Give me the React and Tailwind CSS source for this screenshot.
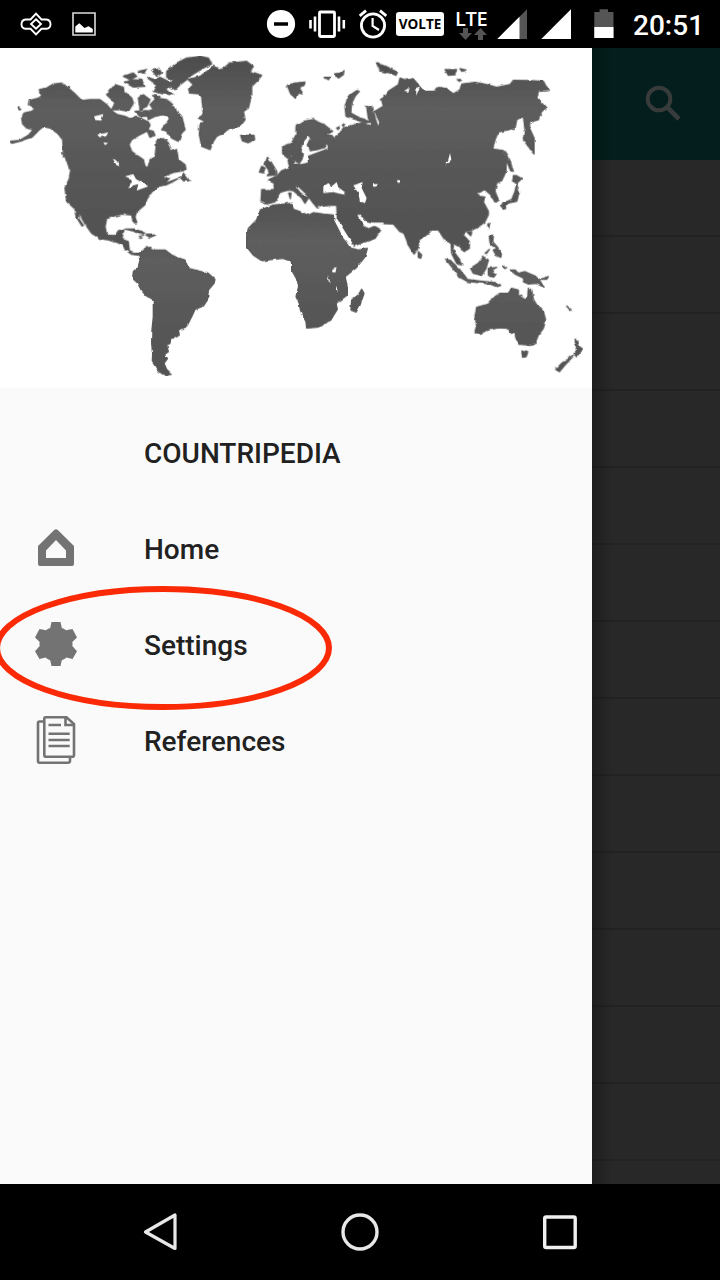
const LAND = "#595959";

function WorldMap() {
  return (
    <svg viewBox="0 0 1776 1020" className="block h-[340px] w-[592px] shrink-0 bg-white" aria-hidden="true">
      <defs>
        <linearGradient id="land" gradientUnits="userSpaceOnUse" x1="0" y1="0" x2="0" y2="1020">
          <stop offset="0" stopColor="#4a4a4a" />
          <stop offset="0.18" stopColor="#5e5e5e" />
          <stop offset="0.5" stopColor="#535353" />
          <stop offset="1" stopColor="#4e4e4e" />
        </linearGradient>
        <filter id="coast" x="0" y="0" width="100%" height="100%">
          <feTurbulence type="fractalNoise" baseFrequency="0.06" numOctaves="1" seed="4" result="n" />
          <feDisplacementMap in="SourceGraphic" in2="n" scale="9" xChannelSelector="R" yChannelSelector="G" />
          <feGaussianBlur stdDeviation="1.3" />
        </filter>
      </defs>
      <g filter="url(#coast)" fill="url(#land)" stroke={LAND} strokeWidth="4" strokeLinejoin="round">
        {/* North America */}
        <path d="M30 280L60 277L85 262L100 245L80 240L68 228L65 210L72 195L95 190L105 182L85 170L88 158L110 152L122 148L118 125L140 120L160 108L185 105L205 120L225 138L245 158L270 155L300 155L320 170L335 188L352 200L375 205L390 212L410 208L425 212L445 222L450 232L440 250L420 260L395 275L387 290L395 310L415 325L430 335L435 355L443 360L450 335L465 325L468 300L470 275L490 272L505 285L515 310L530 305L535 335L555 350L558 362L545 372L556 382L568 398L550 398L540 388L520 400L500 410L475 415L455 432L440 455L435 470L410 491L405 506L410 524L400 524L395 501L365 498L345 503L320 511L315 536L320 561L345 563L355 548L372 546L365 574L385 581L388 611L400 616L420 616L418 622L395 619L375 604L370 591L345 581L300 571L275 556L258 532L238 498L236 512L250 532L246 534L228 505L224 482L200 460L195 420L208 392L212 365L200 340L190 310L188 275L175 258L150 240L130 236L118 245L95 268L65 278L35 286Z" />
        {/* Canadian Arctic */}
        <path d="M500 70L530 45L560 30L600 25L625 30L635 48L610 60L580 78L560 95L540 110L525 125L508 112L520 95L500 88ZM470 150L500 155L525 175L530 195L545 205L555 245L545 255L535 280L515 270L500 250L485 245L500 225L510 210L490 200L465 205L445 215L440 190L460 185L450 170ZM320 140L345 110L370 118L372 130L395 150L400 165L385 190L360 185L335 185L345 165ZM370 85L400 75L410 85L390 95ZM375 103L395 95L425 97L435 115L400 117ZM415 70L440 65L435 76ZM455 65L475 60L485 75L470 85ZM440 88L465 95L480 88L515 105L500 125L520 140L490 138L460 130L470 110ZM415 150L430 140L450 155L440 175L420 185ZM458 142L480 146L470 160ZM405 190L440 188L445 205L420 205ZM440 245L460 250L465 262L450 268ZM55 178L62 184L58 186ZM185 312L193 325L188 326ZM205 348L218 355L208 362Z" />
        {/* Caribbean */}
        <path d="M375 543L405 543L435 556L430 562L400 549ZM438 561L467 561L450 568ZM418 565L426 567L420 568Z" />
        <g transform="translate(300 456)">
          <path d="M116 162L135 145L150 142L165 150L195 150L215 165L230 172L255 180L265 205L290 212L325 220L345 238L342 250L325 270L322 300L310 318L285 328L275 350L262 375L250 388L235 390L238 405L225 413L212 415L210 430L200 435L205 455L192 465L203 475L192 490L200 508L214 522L200 528L185 520L170 505L157 485L158 460L155 430L156 390L160 350L160 298L140 288L125 272L112 248L98 235L100 215L115 200L120 180Z" />
        </g>
        {/* Africa and Madagascar */}
        <g transform="translate(180 396)">
          <path d="M600 90L640 75L695 70L700 88L720 95L745 106L760 98L790 102L820 105L822 122L850 170L876 205L895 210L922 205L915 230L890 262L855 290L862 320L862 345L828 370L832 388L815 415L790 435L770 442L740 444L738 425L722 395L718 370L708 350L716 320L712 300L695 270L695 245L670 235L640 238L605 242L580 225L560 200L560 170L565 145L590 120ZM905 328L912 340L900 375L888 396L873 390L875 360L895 345Z" />
        </g>
        {/* Eurasia */}
        <path d="M785 425L823 425L822 405L805 398L810 393L830 385L845 368L870 358L864 340L868 325L880 328L880 348L905 350L925 345L925 325L985 302L985 290L995 275L1015 262L1030 240L1055 232L1085 225L1115 235L1105 210L1100 175L1118 180L1125 210L1135 240L1140 225L1125 190L1150 175L1145 155L1165 130L1195 110L1200 90L1220 97L1240 92L1258 115L1270 130L1305 130L1315 118L1340 122L1360 138L1380 125L1385 108L1425 103L1460 110L1490 118L1530 110L1540 97L1590 98L1630 100L1645 128L1615 130L1610 150L1625 165L1638 180L1625 190L1615 215L1590 222L1588 240L1602 270L1602 318L1585 295L1570 275L1575 240L1570 205L1550 215L1545 240L1495 252L1485 275L1478 303L1510 308L1518 335L1518 370L1505 398L1490 405L1485 430L1495 455L1485 462L1472 440L1455 425L1430 435L1435 445L1455 447L1450 462L1465 490L1465 500L1455 521L1430 541L1410 548L1395 551L1390 561L1408 581L1408 601L1392 611L1380 596L1362 586L1358 606L1380 636L1385 651L1370 646L1355 616L1353 586L1335 576L1315 546L1295 546L1285 556L1258 578L1252 606L1242 618L1228 596L1212 556L1200 551L1180 528L1115 526L1095 516L1078 504L1095 531L1105 538L1120 532L1142 546L1125 571L1060 594L1042 561L1012 513L1010 471L970 474L955 466L952 480L940 466L930 452L918 436L892 412L885 414L900 434L925 450L915 466L905 450L880 428L865 426L845 431L825 461L800 468L783 461Z" />
        <g transform="translate(540 0)">
          <path d="M308 295L308 318L322 330L335 320L345 340L358 345L365 335L370 320L362 300L370 280L385 262L392 270L382 290L388 308L410 305L435 298L440 290L465 275L455 262L435 262L458 250L430 228L400 215L370 220L348 235L348 260L335 285ZM262 328L275 345L290 370L290 380L262 383L268 370L255 350ZM245 355L255 360L250 375L238 372ZM182 262L222 262L224 275L205 284L187 278ZM322 112L345 105L375 102L372 112L358 118L368 138L355 135L348 152L332 138ZM538 130L530 128L505 145L495 175L498 205L520 212L555 225L570 222L530 205L512 195L515 165L525 145ZM435 88L450 88L445 95ZM465 78L480 75L492 68L490 80L475 90ZM470 240L478 236L474 245ZM486 232L494 226L490 236ZM326 435L333 435L331 452ZM410 468L425 470L422 474Z" />
          <path d="M25 95L60 85L100 55L125 65L150 45L200 40L220 55L210 70L245 82L235 95L215 115L215 140L205 180L190 190L195 215L180 235L150 240L130 255L110 265L100 280L90 305L65 295L58 260L60 230L75 220L55 210L70 200L65 145L55 137L28 135L30 120L40 110Z" />
        </g>
        <g transform="translate(1110 0)">
          <path d="M18 42L35 50L60 62L82 72L78 82L60 75L30 68ZM225 65L260 65L255 80L235 82ZM270 62L288 66L275 70ZM262 95L275 95L268 100ZM430 383L440 383L455 392L438 408L428 400ZM440 408L448 435L440 460L415 465L405 483L393 475L400 463L425 455L435 430ZM405 310L415 325L430 370L422 368L412 345Z" />
        </g>
        {/* South-east Asia and Oceania */}
        <g transform="translate(1140 456)">
          <path d="M197 177L212 182L240 210L260 235L258 242L240 232L215 200ZM258 238L300 243L345 248L365 255L350 260L330 252L260 244ZM272 205L295 190L310 170L325 180L318 205L305 226L280 220ZM325 205L350 202L335 210L348 220L340 235L325 225ZM370 198L380 203L374 206ZM390 210L405 210L415 220L435 215L465 228L480 243L492 262L470 250L445 252L430 245L432 235L405 222ZM480 238L505 230L500 238ZM328 108L340 110L338 125L355 145L345 140L330 128ZM340 150L350 145L365 158L362 172L348 165ZM315 160L328 148L320 160ZM323 72L330 70L326 85ZM262 97L275 95L272 107ZM115 155L125 165L122 175L115 172Z" />
          <path d="M285 345L290 322L325 312L345 290L360 280L385 280L395 265L415 270L415 285L435 300L443 290L445 265L455 270L460 298L470 315L490 335L497 360L490 385L475 405L465 430L445 435L420 433L408 415L405 400L390 400L382 385L355 383L325 390L300 400L285 398L290 380ZM425 453L443 458L438 470L428 472ZM585 418L592 420L598 440L608 447L590 470L582 462L590 445ZM580 468L555 495L538 515L527 508L545 490ZM560 318L573 328L568 328Z" />
        </g>
        {/* Inland seas and lakes */}
        <g fill="#fff" stroke="none">
          <path d="M970 415L985 405L995 415L1010 402L1015 418L1035 432L1030 440L1000 432L970 435ZM1060 412L1088 402L1085 420L1100 450L1095 465L1080 460L1075 435ZM1119 408L1130 408L1129 416L1119 416ZM1350 315L1354 335L1336 353L1345 335ZM1192 397L1200 396L1200 404L1192 404ZM1212 128L1230 120L1224 132ZM1250 118L1260 120L1248 142ZM998 664L1010 660L1006 674L996 672ZM983 680L990 700L987 705ZM1008 710L1013 730L1008 732Z" />
          <path d="M1072 502L1082 500L1096 520L1118 524L1150 524L1152 530L1120 534L1106 540L1094 534Z" />
          <path d="M1002 514L1012 514L1040 560L1062 592L1056 600L1030 570Z" />
          <path d="M282 205L310 198L304 218L286 216ZM292 260L325 253L318 265L298 267ZM310 283L325 285L315 291ZM338 332L355 340L358 354L350 352ZM375 385L400 378L408 393L430 405L445 415L410 428L415 408L400 412L385 422L395 393ZM490 388L520 375L550 370L545 385L520 395L500 402L512 390Z" />
        </g>
      </g>
    </svg>
  );
}

function StatusBar() {
  return (
    <header className="flex h-12 shrink-0 items-center bg-black text-white">
      <svg className="ml-5 h-12 w-8" viewBox="20 0 32 48" fill="none" stroke="white" strokeWidth="1.9">
        <path d="M30.5 19.5L36 13.7L41.5 19.5H46.5A4.7 4.7 0 0 1 46.5 28.8H41.5L36 34.3L30.5 28.8H25.5A4.7 4.7 0 0 1 25.5 19.5Z" />
        <path d="M36 19.2L41 24L36 28.8L31 24Z" />
      </svg>
      <svg className="ml-5 h-12 w-6" viewBox="72 0 24 48">
        <path d="M73 13H95V35H73Z" fill="none" stroke="#ddd" strokeWidth="1.6" />
        <path d="M75.3 32.5V26.5L79.3 23.2L84.5 28L88.5 26.3L92.8 29V32.5Z" fill="white" />
      </svg>
      <svg className="ml-[170px] h-12 w-[30px]" viewBox="266 0 30 48">
        <circle cx="281" cy="24" r="14.1" fill="white" />
        <path d="M274 24H288" stroke="black" strokeWidth="3.5" />
      </svg>
      <svg className="ml-3 h-12 w-[38px]" viewBox="308 0 38 48" fill="none" stroke="white">
        <rect x="319.5" y="12" width="15" height="24.5" rx="1" strokeWidth="2.8" />
        <path d="M310.5 20V28.5M315 16.5V31.5M339 16.5V31.5M343.8 20V28.5" strokeWidth="2.6" />
      </svg>
      <svg className="ml-3 h-12 w-[30px]" viewBox="358 0 30 48" fill="none" stroke="white">
        <circle cx="373" cy="25.5" r="11.6" strokeWidth="2.8" />
        <path d="M372.6 18V26L379 30" strokeWidth="2.2" />
        <path d="M359.7 15.8L366 10.6M380 10.6L386.3 15.8" strokeWidth="2.8" />
      </svg>
      <span className="ml-2 flex h-6 w-12 items-center justify-center rounded-[3px] bg-white font-['Open_Sans'] text-[13.5px] leading-6 font-bold text-black">
        VOLTE
      </span>
      <span className="ml-[11px] flex w-[35px] flex-col">
        <span className="font-['Open_Sans'] text-[20px] leading-[19px] font-semibold tracking-[-0.3px] text-white">LTE</span>
        <svg className="h-3 w-[35px]" viewBox="455 28 35 12">
          <path d="M463 28H468V33H472L465.5 40L459 33H463ZM478 40V35H474L480.5 28L487 35H483V40Z" fill="#555" />
        </svg>
      </span>
      <svg className="ml-[7px] h-12 w-[30px]" viewBox="497 0 30 48">
        <path d="M497.3 39L527 9.3V39Z" fill="#555" />
        <path d="M497.3 39L519.5 16.8V39Z" fill="white" />
      </svg>
      <svg className="ml-3.5 h-12 w-[30px]" viewBox="541 0 30 48">
        <path d="M541.3 39L571 9.3V39Z" fill="white" />
      </svg>
      <svg className="ml-[23px] h-12 w-5" viewBox="594 0 20 48">
        <path d="M594.3 12H599.5V9.3H608V12H613.5V38H594.3Z" fill="#555" />
        <path d="M594.3 27H613.5V38H594.3Z" fill="white" />
      </svg>
      <span className="ml-[19px] pt-1 font-[Roboto] text-[28px] leading-none font-medium whitespace-nowrap">20:51</span>
    </header>
  );
}

function HomeIcon() {
  return (
    <svg className="h-12 w-12" viewBox="32 526 48 48">
      <path fillRule="evenodd" fill="#737373" d="M38 546L54.2 530Q56 528.4 57.8 530L74 546V564Q74 566 72 566H40Q38 566 38 564ZM46 558H66V550.5L56 540L46 550.5Z" />
    </svg>
  );
}

function SettingsIcon() {
  return (
    <svg className="h-12 w-12" viewBox="32 622 48 48">
      <path fill="#737373" d="M51.5 622H60.5L61.8 628Q63.8 628.6 66 630.3L72.5 629L77 637.5L72.3 642Q72.8 644 72.3 646L77 651.3L72.5 659L66.5 657.5Q64 659.7 61.8 660.3L60.5 666H51.5L50.2 660.3Q48 659.7 45.5 657.5L39.5 659L35 651.3L39.7 646Q39.2 644 39.7 642L35 637.5L39.5 629L46 630.3Q48.2 628.6 50.2 628Z" />
    </svg>
  );
}

function ReferencesIcon() {
  return (
    <svg className="h-[52px] w-12" viewBox="32 716 48 52" fill="none" stroke="#737373" strokeWidth="2.6">
      <path d="M43 721.5H39.5Q38 721.5 38 723V761Q38 762.7 39.5 762.7H68Q70 762.7 70 761V757" />
      <path d="M45.5 717.3H66.5L74 724V755Q74 756.8 72.2 756.8H46Q44.3 756.8 44.3 755V718.8Q44.3 717.3 45.5 717.3ZM65.5 717V725H74" />
      <path d="M48.5 725H61M48.5 733.8H69.7M48.5 740H69.7M48.5 746H69.7" strokeWidth="2.6" />
    </svg>
  );
}

function MenuRow({ icon, label }) {
  return (
    <li className="flex h-24 items-center pl-8">
      <span className="flex w-12 items-center justify-center">{icon}</span>
      <span className="ml-16 text-[28px] leading-none">{label}</span>
    </li>
  );
}

const DIVIDER_ROWS = Array.from({ length: 13 }, (_, i) => i);

export default function App() {
  return (
    <div className="relative flex h-[1280px] w-[720px] flex-col overflow-hidden bg-black font-[Roboto,sans-serif]">
      <StatusBar />
      <main className="flex h-[1136px] shrink-0">
        <nav className="flex w-[592px] shrink-0 flex-col bg-[#fafafa] font-medium text-[#212121]">
          <WorldMap />
          <ul className="pt-[18px]">
            <MenuRow label="COUNTRIPEDIA" />
            <MenuRow icon={<HomeIcon />} label="Home" />
            <MenuRow icon={<SettingsIcon />} label="Settings" />
            <MenuRow icon={<ReferencesIcon />} label="References" />
          </ul>
        </nav>
        <section className="relative flex w-32 flex-col overflow-hidden bg-[#282828]">
          <div className="flex h-28 shrink-0 items-center bg-[#031e1c] pl-[52px]">
            <svg className="h-10 w-10" viewBox="644 84 40 40" fill="none" stroke="#373b3a">
              <circle cx="659" cy="99" r="11.3" strokeWidth="4" />
              <path d="M667 107L679 119" strokeWidth="4.6" />
            </svg>
          </div>
          {DIVIDER_ROWS.map((i) => (
            <div key={i} className="h-[77px] shrink-0 border-b-2 border-[#222]" />
          ))}
          <div className="absolute inset-y-0 left-0 w-5 bg-linear-to-r from-black/25 to-transparent" />
        </section>
      </main>
      <footer className="flex h-24 shrink-0 items-center justify-between bg-black px-[136px]">
        <svg className="h-12 w-12" viewBox="136 1208 48 48" fill="none" stroke="#e8e8e8" strokeWidth="3.2" strokeLinejoin="round">
          <path d="M175 1215V1248.5L145.5 1232Z" />
        </svg>
        <svg className="h-12 w-12" viewBox="336 1208 48 48" fill="none" stroke="#e8e8e8" strokeWidth="3.4">
          <circle cx="360" cy="1232" r="17" />
        </svg>
        <svg className="h-12 w-12" viewBox="536 1208 48 48" fill="none" stroke="#f0f0f0" strokeWidth="3.4">
          <rect x="544.7" y="1217" width="30.5" height="30.5" rx="1.5" />
        </svg>
      </footer>
      <svg className="absolute top-[580px] left-0 h-[136px] w-[340px]" viewBox="0 580 340 136" fill="none" aria-hidden="true">
        <ellipse cx="163" cy="648" rx="166" ry="59" stroke="#fb2a06" strokeWidth="6" />
      </svg>
    </div>
  );
}
